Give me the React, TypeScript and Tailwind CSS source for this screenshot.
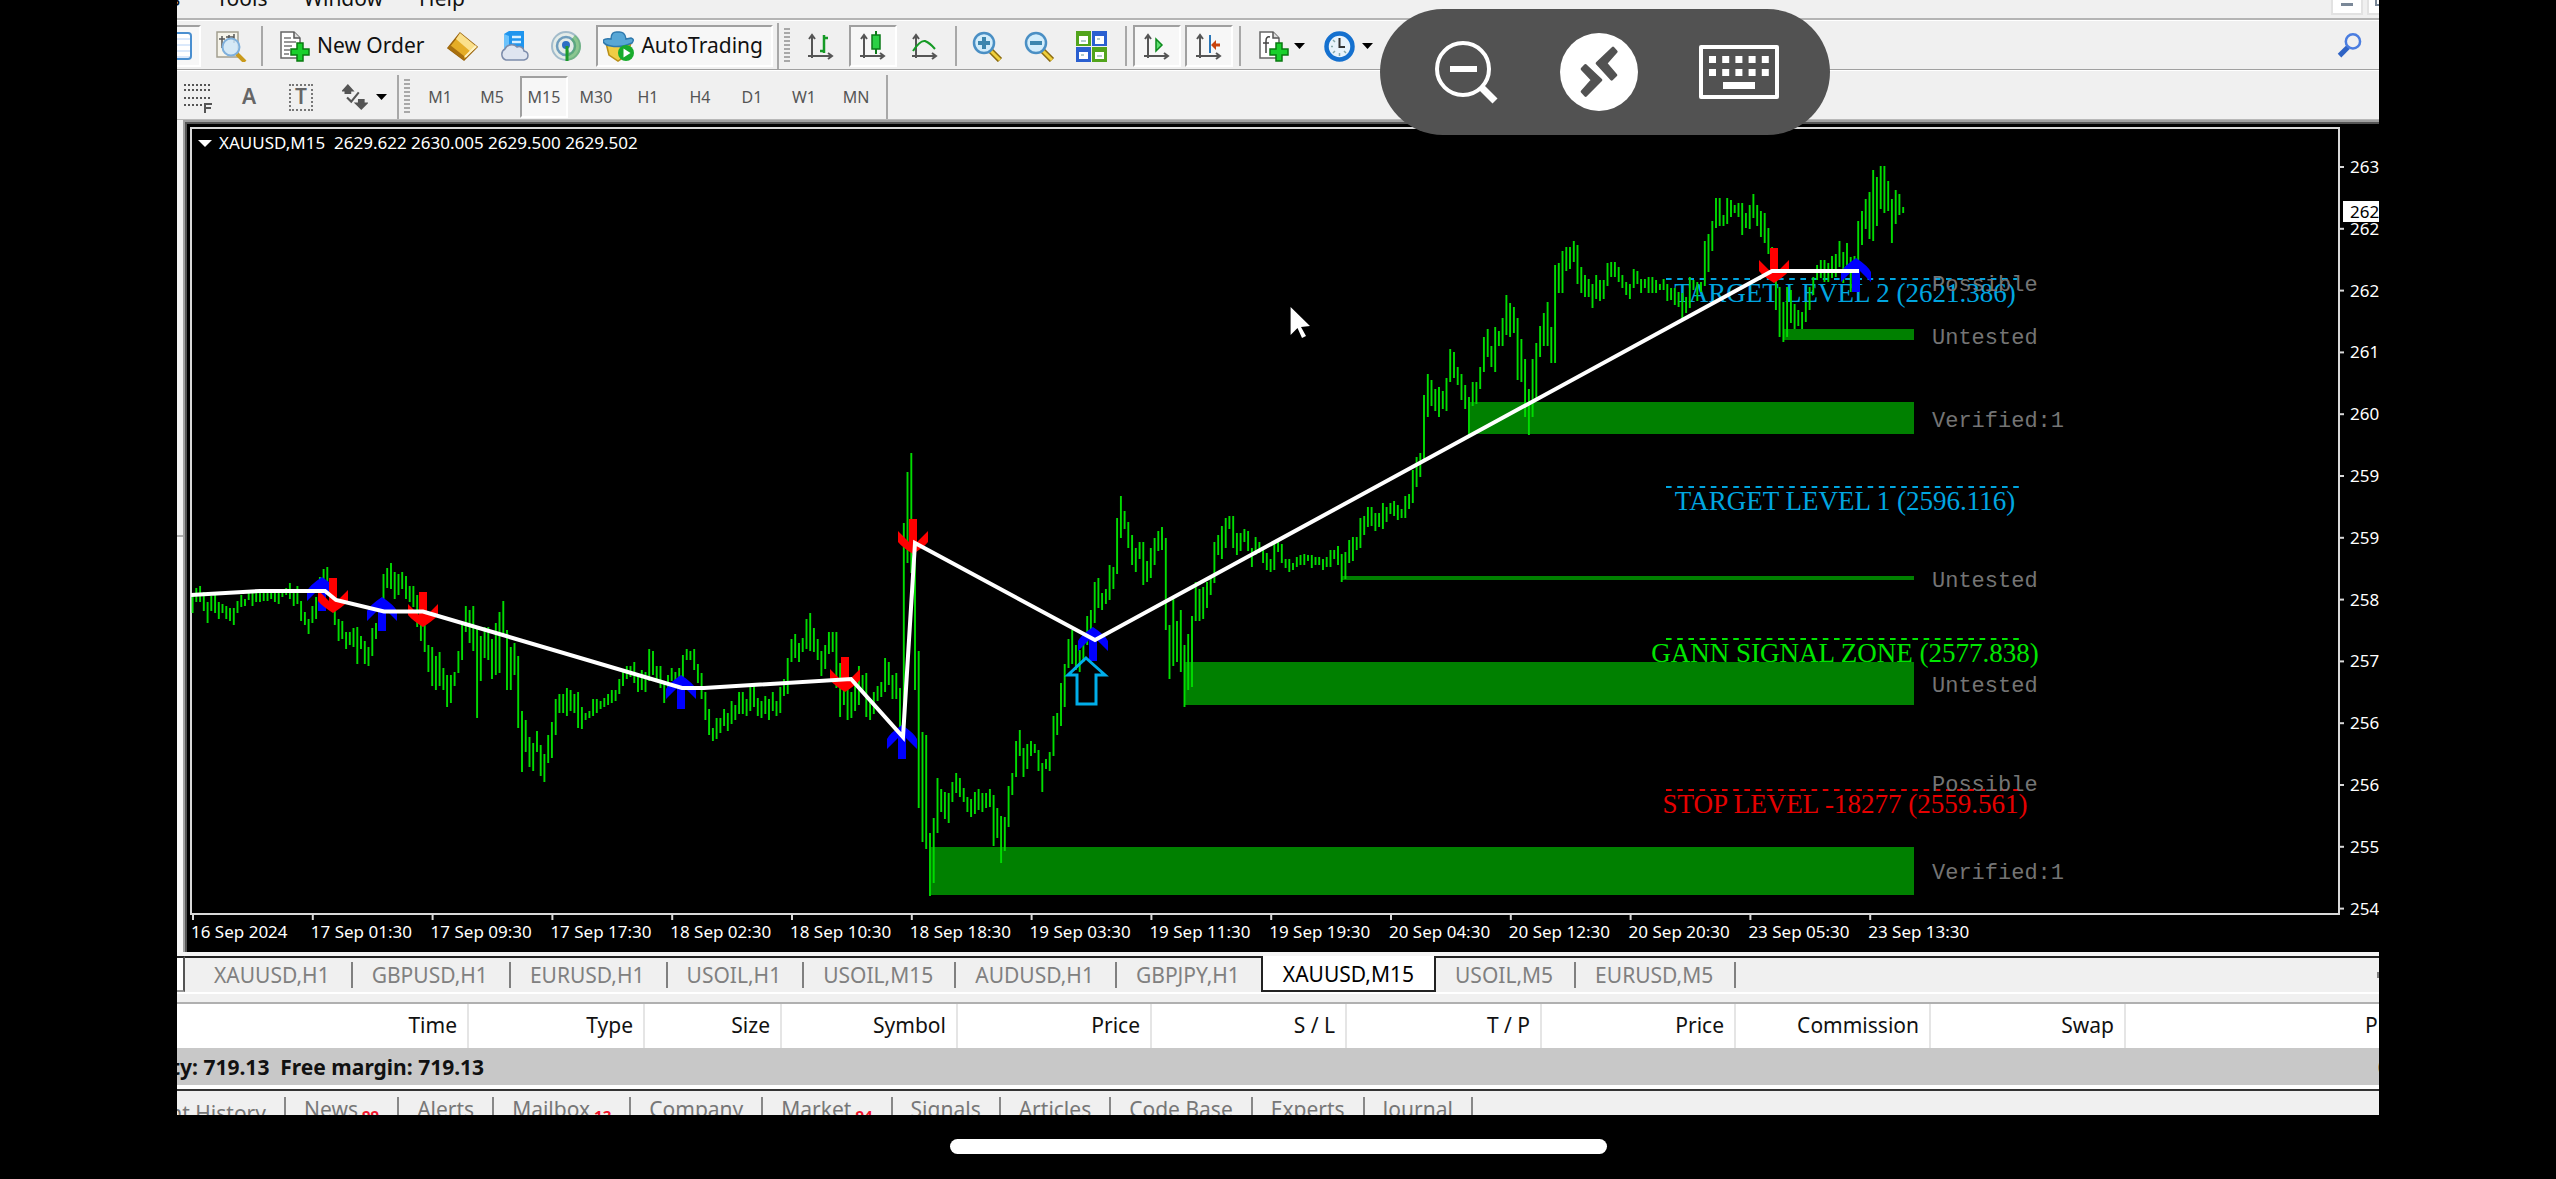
import type { ReactNode } from "react"

// high / low pairs of every M15 bar, in chart units
const BARS = `
595 613,588 602,586 602,592 611,602 623,596 611,594 613,602 619,604 613,606 619,608 621,608 625,601 613,595 607,599 606,593 600,
593 606,593 602,593 602,593 601,593 601,592 599,592 602,592 604,590 597,588 595,583 599,590 606,586 604,601 621,612 625,619 634,
606 623,597 619,577 600,569 587,567 587,587 607,593 625,619 641,621 639,632 649,632 645,628 647,627 664,636 649,641 664,647 666,
628 656,623 639,607 627,574 607,568 588,563 589,572 599,574 595,572 589,576 599,586 602,586 607,595 627,600 641,620 652,645 672,
647 686,656 690,652 686,668 690,675 707,675 703,672 686,651 673,622 660,606 632,610 643,606 651,627 718,636 681,627 658,627 660,
639 679,623 675,612 673,601 636,630 690,647 690,643 675,656 728,711 772,720 752,737 767,743 771,731 752,745 776,754 782,735 763,
722 758,699 735,694 713,694 713,688 716,690 711,694 713,692 728,707 729,713 720,711 718,699 716,699 713,701 709,698 707,694 705,
690 703,690 701,679 694,672 686,666 679,666 677,662 683,675 692,670 690,672 692,649 681,651 675,666 681,666 688,681 703,675 688,
668 681,672 683,668 687,655 677,649 660,651 660,649 670,664 683,673 699,692 720,709 735,728 741,718 739,718 733,709 726,713 731,
701 724,705 720,692 714,692 714,699 716,686 711,685 707,698 716,701 718,696 714,699 720,692 711,701 716,687 713,679 696,658 694,
639 662,634 658,643 662,638 652,619 649,613 651,628 652,639 660,651 676,645 669,632 654,632 652,632 688,663 717,677 705,687 720,
692 718,680 711,666 705,675 692,673 717,702 720,692 714,686 701,682 697,658 692,662 685,675 699,673 699,688 735,523 737,472 563,
453 573,543 690,651 808,732 842,735 849,833 896,818 883,778 833,789 812,792 819,793 823,782 802,773 793,778 797,788 802,797 812,
799 817,792 814,789 810,793 812,793 808,789 807,795 846,808 838,816 863,817 851,786 827,773 795,741 777,730 756,748 777,744 769,
741 756,744 753,750 771,763 792,759 769,752 771,716 756,713 735,683 726,664 707,639 668,630 664,645 670,650 672,643 662,616 645,
610 637,582 623,578 608,593 610,589 604,565 600,567 589,518 574,496 538,511 529,522 548,535 565,548 572,542 559,542 585,561 582,
548 578,538 565,531 551,527 550,538 630,625 679,598 666,621 662,610 672,645 707,634 690,616 687,582 621,589 621,587 619,582 608,
577 595,542 583,535 555,526 559,518 548,516 529,516 548,533 555,533 551,529 542,531 551,548 567,537 555,542 553,547 563,553 570,
559 572,542 570,542 552,544 563,559 568,559 572,563 570,557 567,555 565,554 565,555 561,555 568,557 565,557 565,559 570,557 567,
550 567,550 559,546 565,554 582,552 579,540 563,537 561,537 550,518 548,516 535,507 527,507 526,513 531,513 527,503 529,507 522,
503 514,501 516,505 520,509 518,496 518,494 509,470 503,457 487,453 477,395 461,374 417,380 406,389 411,387 417,391 409,378 411,
349 382,352 378,367 385,374 400,385 409,397 435,382 406,382 404,367 389,337 372,329 357,346 367,327 372,331 346,318 346,295 335,
303 337,307 333,318 380,339 382,359 417,389 435,359 417,343 400,326 357,313 346,302 346,327 363,265 363,263 293,251 293,247 271,
247 269,241 262,245 284,267 293,275 297,279 297,284 308,275 299,280 301,280 299,263 286,262 277,262 277,267 282,275 288,282 295,
284 299,269 288,271 284,279 293,279 288,277 293,277 293,280 293,284 290,279 290,284 301,288 300,288 305,292 307,293 320,297 313,
277 308,280 290,282 301,282 292,241 286,234 272,221 251,198 228,198 226,215 226,198 224,200 217,205 213,203 217,203 235,213 228,
205 229,194 218,205 226,211 237,213 243,228 254,247 273,277 310,287 337,302 342,287 337,290 323,304 329,310 326,312 329,302 322,
287 310,277 295,265 280,260 278,260 282,263 282,256 278,254 277,241 267,252 283,243 270,257 292,256 277,221 263,211 245,199 229,
192 239,170 241,177 226,166 209,166 213,181 211,199 243,190 224,194 215,207 213`

const FIRST_BAR = 192.6
const BAR_STEP = 3.743

const barPath = BARS.trim()
  .split(",")
  .map((pair, i) => {
    const [high, low] = pair.trim().split(" ")
    return `M${(FIRST_BAR + i * BAR_STEP).toFixed(1)} ${high}V${low}`
  })
  .join("")

const ZONES = [
  { x: 1784, top: 329, bottom: 340 },
  { x: 1470, top: 402, bottom: 434 },
  { x: 1342, top: 576, bottom: 580 },
  { x: 1185, top: 662, bottom: 705 },
  { x: 931, top: 847, bottom: 895 },
]

const LEVELS = [
  { label: "TARGET LEVEL 2 (2621.386)", y: 279, color: "#00a6e0" },
  { label: "TARGET LEVEL 1 (2596.116)", y: 487, color: "#00a6e0" },
  { label: "GANN SIGNAL ZONE (2577.838)", y: 639, color: "#00e600" },
  { label: "STOP LEVEL -18277 (2559.561)", y: 790, color: "#e60000" },
]

const NOTES = [
  { label: "Possible", y: 291 },
  { label: "Untested", y: 344 },
  { label: "Verified:1", y: 427 },
  { label: "Untested", y: 587 },
  { label: "Untested", y: 692 },
  { label: "Possible", y: 791 },
  { label: "Verified:1", y: 879 },
]

const BUYS = [[322, 577], [382, 597], [681, 675], [902, 725], [1093, 627], [1856, 258]]
const SELLS = [[333, 613], [423, 627], [845, 692], [913, 554], [1774, 283]]

const PRICES = [
  "2634.955", "2627.515", "2620.075", "2612.635", "2604.955", "2597.515", "2590.075",
  "2582.635", "2574.955", "2567.515", "2560.075", "2552.635", "2544.955",
]

const TIMES = [
  "16 Sep 2024", "17 Sep 01:30", "17 Sep 09:30", "17 Sep 17:30", "18 Sep 02:30",
  "18 Sep 10:30", "18 Sep 18:30", "19 Sep 03:30", "19 Sep 11:30", "19 Sep 19:30",
  "20 Sep 04:30", "20 Sep 12:30", "20 Sep 20:30", "23 Sep 05:30", "23 Sep 13:30",
]

const PERIODS = ["M1", "M5", "M15", "M30", "H1", "H4", "D1", "W1", "MN"]

const CHART_TABS = [
  "XAUUSD,H1", "GBPUSD,H1", "EURUSD,H1", "USOIL,H1", "USOIL,M15",
  "AUDUSD,H1", "GBPJPY,H1", "XAUUSD,M15", "USOIL,M5", "EURUSD,M5",
]

const COLUMNS = [
  { name: "Time", width: "w-[291px]" },
  { name: "Type", width: "w-[176px]" },
  { name: "Size", width: "w-[137px]" },
  { name: "Symbol", width: "w-[176px]" },
  { name: "Price", width: "w-[194px]" },
  { name: "S / L", width: "w-[195px]" },
  { name: "T / P", width: "w-[195px]" },
  { name: "Price", width: "w-[194px]" },
  { name: "Commission", width: "w-[195px]" },
  { name: "Swap", width: "w-[195px]" },
  { name: "Profit", width: "" },
]

const TERMINAL_TABS = [
  { name: "News", count: "99" },
  { name: "Alerts" },
  { name: "Mailbox", count: "12" },
  { name: "Company" },
  { name: "Market", count: "94" },
  { name: "Signals" },
  { name: "Articles" },
  { name: "Code Base" },
  { name: "Experts" },
  { name: "Journal" },
]

function Icon({ children, size = "size-[31px]" }: { children: ReactNode; size?: string }) {
  return (
    <svg viewBox="0 0 31 31" className={`${size} shrink-0`} fill="none" aria-hidden="true">
      {children}
    </svg>
  )
}

function Axes() {
  return (
    <path
      d="M6 4V27M2 25H26M3 8L6 4L9 8M22 22L26 25L22 28"
      stroke="#555"
      strokeWidth="2"
    />
  )
}

function Plus() {
  return (
    <path
      d="M17 14h6v6h6v6h-6v6h-6v-6h-6v-6h6z"
      fill="#19d02c"
      stroke="#087a10"
      strokeWidth="1.5"
      transform="translate(1 -2)"
    />
  )
}

function Page() {
  return (
    <>
      <path d="M2 1H15L21 7V27H2Z" fill="#fff" stroke="#666" strokeWidth="1.5" />
      <path d="M15 1V7H21" fill="#ddd" stroke="#555" strokeWidth="1.5" />
    </>
  )
}

function Lens({ minus }: { minus?: boolean }) {
  return (
    <>
      <path d="M19 20L28 29" stroke="#8a6a10" strokeWidth="6" />
      <path d="M19 20L28 29" stroke="#f0cf3c" strokeWidth="3" />
      <circle cx="12" cy="12" r="10" fill="#d3edfb" stroke="#4a8fc4" strokeWidth="2.5" />
      <path d={minus ? "M6 12H18" : "M6 12H18M12 6V18"} stroke="#3d86ae" strokeWidth="4" />
    </>
  )
}

function Caret() {
  return (
    <svg viewBox="0 0 11 6" className="h-1.5 w-[11px]" aria-hidden="true">
      <path d="M0 0H11L5.5 6Z" fill="#000" />
    </svg>
  )
}

function Separator() {
  return <div className="h-10 w-0.5 bg-[#a8a8a8]" />
}

function Gripper() {
  return (
    <div className="h-9 w-1.5 bg-[repeating-linear-gradient(to_bottom,#a8a8a8_0_2px,#f0f0f0_2px_4px)]" />
  )
}

function Tool({ label, pressed, children }: { label: string; pressed?: boolean; children: ReactNode }) {
  return (
    <button
      aria-label={label}
      className={`mx-0.5 flex h-[42px] w-12 items-center justify-center border-2 ${
        pressed ? "border-t-[#a0a0a0] border-l-[#a0a0a0] border-r-white border-b-white bg-[#f7f7f7]" : "border-transparent"
      }`}
    >
      {children}
    </button>
  )
}

function MenuBar() {
  return (
    <nav className="flex h-5 items-end justify-between overflow-hidden border-b-2 border-[#b4b4b4]">
      <div className="flex gap-9 pb-1.5 text-[21px] leading-7">
        <a href="#charts" className="-ml-[61px]">Charts</a>
        <a href="#tools">Tools</a>
        <a href="#window">Window</a>
        <a href="#help">Help</a>
      </div>
      <div className="flex h-full gap-1 pb-[3px]">
        <button aria-label="Minimize" className="flex w-8 justify-center border-2 border-t-0 border-[#e2e2e2] bg-white">
          <span className="mt-[3px] h-[3px] w-3 bg-[#7a8898]" />
        </button>
        <button aria-label="Restore" className="flex w-3 justify-end overflow-hidden border-2 border-t-0 border-r-0 border-[#e2e2e2] bg-white">
          <span className="h-1.5 w-1 border-b-2 border-l-2 border-[#7a8898]" />
        </button>
      </div>
    </nav>
  )
}

function MainToolbar() {
  return (
    <div className="flex h-[50px] items-center border-t border-b border-t-white border-b-[#a0a0a0] pt-0.5 text-[21px]">
      <button aria-label="Market Watch" className="flex h-[42px] w-6 items-center border-2 border-l-0 border-t-[#a0a0a0] border-r-white border-b-white bg-[#f7f7f7]">
        <span className="h-7 w-[15px] rounded-r-sm border-2 border-l-0 border-[#4a8fd0] bg-[repeating-linear-gradient(to_bottom,#fff_0_4px,#dbe9fb_4px_6px)]" />
      </button>
      <div className="ml-1">
        <Tool label="Data Window">
          <Icon>
            <path d="M1 1H22V26H1Z" fill="#f6f4ea" stroke="#a39f90" strokeWidth="1.5" />
            <path d="M6 5V17M3 8H9M13 4V9M10 6H18M18 3V12" stroke="#555" strokeWidth="1.5" />
            <path d="M20 22L29 31" stroke="#c99a1c" strokeWidth="4" />
            <circle cx="15" cy="16" r="8.5" fill="#cfe6f8" fillOpacity=".85" stroke="#7fb0dc" strokeWidth="2" />
          </Icon>
        </Tool>
      </div>
      <div className="ml-1"><Separator /></div>
      <button className="ml-1 flex items-center gap-[7px] px-3">
        <Icon>
          <Page />
          <path d="M5 7H12M5 11H17M5 15H13M5 19H11M5 23H10" stroke="#777" strokeWidth="1.5" />
          <Plus />
        </Icon>
        New Order
      </button>
      <Tool label="MetaEditor">
        <Icon>
          <path d="M13 2L30 16L17 29L1 17Z" fill="#e5ad27" stroke="#9b640c" strokeWidth="1.5" />
          <path d="M13 2L30 16L24 21L9 8Z" fill="#fbe08a" />
          <path d="M1 17L17 29L17 25L3 14Z" fill="#a8700f" />
          <path d="M18 26L29 15" stroke="#fff3c4" strokeWidth="2" />
        </Icon>
      </Tool>
      <Tool label="Virtual Hosting">
        <Icon>
          <path d="M5 3L10 0H25V18H5Z" fill="#1f95ee" />
          <path d="M5 3L10 5V19H5Z" fill="#6cc2fb" />
          <path d="M13 6H22M13 11H22" stroke="#d8f0ff" strokeWidth="2.5" />
          <path d="M7 29a6 6 0 0 1-1-11a7 6 0 0 1 12-2a5 5 0 0 1 7 4a5 4.6 0 0 1 0 9z" fill="#dfe5f0" stroke="#7c8cab" strokeWidth="1.5" />
        </Icon>
      </Tool>
      <Tool label="Signals">
        <Icon>
          <circle cx="15" cy="15" r="14" fill="#e4ece8" stroke="#a3bccb" strokeWidth="2" />
          <circle cx="15" cy="15" r="9" stroke="#6f9dbd" strokeWidth="2.5" />
          <path d="M15 15V30A15 15 0 0 0 30 15A15 15 0 0 0 24 4L20 9A8 8 0 0 1 19 22Z" fill="#4fae55" fillOpacity=".6" />
          <circle cx="15" cy="14" r="4" fill="#2c6fc4" />
          <path d="M16 15V30" stroke="#1c9a2b" strokeWidth="3" />
        </Icon>
      </Tool>
      <button className="ml-1 flex h-[42px] items-center gap-[7px] border-2 border-t-[#a0a0a0] border-l-[#a0a0a0] border-r-white border-b-white bg-[#f7f7f7] pr-2 pl-[5px]">
        <Icon>
          <path d="M3 12L28 12L24 24L15 30L6 24Z" fill="#f0cd45" stroke="#b98f17" strokeWidth="1.5" />
          <path d="M0 10Q1 14 8 15Q18 17 29 12Q32 8 28 7L23 8Q22 0 15 1Q8 0 8 8Q1 7 0 10Z" fill="#58a7d6" stroke="#2f79ad" strokeWidth="1.5" />
          <circle cx="23" cy="22" r="8" fill="#18ab2c" />
          <path d="M20.5 17.5L27.5 22L20.5 26.5Z" fill="#fff" />
        </Icon>
        AutoTrading
      </button>
      <div className="ml-1 h-full w-0.5 bg-[#a8a8a8]" />
      <div className="mx-[5px]"><Gripper /></div>
      <Tool label="Bar Chart">
        <Icon>
          <Axes />
          <path d="M18 4V22M18 7H22M14 20H18" stroke="#159a25" strokeWidth="2.5" />
        </Icon>
      </Tool>
      <Tool label="Candlesticks" pressed>
        <Icon>
          <Axes />
          <path d="M18 0V23" stroke="#0b7a18" strokeWidth="2" />
          <path d="M14 4H22V18H14Z" fill="#2bd045" stroke="#0b7a18" strokeWidth="1.5" />
        </Icon>
      </Tool>
      <Tool label="Line Chart">
        <Icon>
          <Axes />
          <path d="M3 20Q10 9 15 10Q20 12 25 18" stroke="#159a25" strokeWidth="2" />
        </Icon>
      </Tool>
      <div className="mx-1"><Separator /></div>
      <Tool label="Zoom In"><Icon><Lens /></Icon></Tool>
      <Tool label="Zoom Out"><Icon><Lens minus /></Icon></Tool>
      <Tool label="Tile Windows">
        <Icon>
          <path d="M0 0H15V15H0ZM16 16H31V31H16Z" fill="#52a41c" />
          <path d="M16 0H31V15H16ZM0 16H15V31H0Z" fill="#2a5fd0" />
          <path d="M3 5H12V13H3ZM19 5H28V13H19ZM3 21H12V28H3ZM19 21H28V28H19Z" fill="#fff" />
          <path d="M5 10H10M21 8H24M5 24H8M21 25H26" stroke="#9bb" strokeWidth="1.5" />
        </Icon>
      </Tool>
      <div className="mr-1 ml-2"><Separator /></div>
      <Tool label="Auto Scroll" pressed>
        <Icon>
          <Axes />
          <path d="M14 8V20L20 14Z" fill="#5fe070" stroke="#0b8a1c" strokeWidth="1.5" />
        </Icon>
      </Tool>
      <Tool label="Chart Shift" pressed>
        <Icon>
          <Axes />
          <path d="M16 4V22" stroke="#2c77b8" strokeWidth="2" />
          <path d="M17 14L22 9V12.500H26V15.500H22V19Z" fill="#c8420c" />
        </Icon>
      </Tool>
      <div className="ml-1"><Separator /></div>
      <button aria-label="Indicators" className="ml-1.5 flex items-center gap-[5px] px-[11px]">
        <Icon>
          <Page />
          <path d="M12 6Q8 5 8 10V22M5 12H11" stroke="#444" strokeWidth="1.5" />
          <Plus />
        </Icon>
        <Caret />
      </button>
      <button aria-label="Periods" className="flex items-center gap-[7px] px-2">
        <Icon>
          <circle cx="15.5" cy="15.5" r="13" fill="#e8f3fb" stroke="#1470cf" strokeWidth="4.5" />
          <path d="M15.5 7V16H21" stroke="#333" strokeWidth="2" />
          <path d="M15.5 22V25M7 15.5H9M9 9L11 11M9 22L11 20M22 22L20 20" stroke="#8aa" strokeWidth="1.5" />
        </Icon>
        <Caret />
      </button>
      <button aria-label="Search" className="mr-4 ml-auto">
        <Icon size="size-[26px]">
          <path d="M3 27L13 17" stroke="#2f63c4" strokeWidth="6" />
          <circle cx="19" cy="10" r="8.5" stroke="#4a7de0" strokeWidth="3" />
        </Icon>
      </button>
    </div>
  )
}

function PeriodToolbar() {
  return (
    <div className="flex h-[50px] items-center border-t border-b border-t-white border-b-[#b8b8b8] pt-1 text-base text-[#555]">
      <button aria-label="Fibonacci" className="w-[46px] pl-[7px]">
        <Icon>
          <path d="M0 3H26M0 8H26M0 16H26M0 23H18" stroke="#555" strokeWidth="2" strokeDasharray="2 2" />
          <path d="M21 31V22H28M21 26H27" stroke="#555" strokeWidth="2" />
        </Icon>
      </button>
      <button className="w-[52px] text-[21px] font-semibold text-[#666]">A</button>
      <button className="flex w-[52px] justify-center">
        <span className="flex h-[27px] w-6 items-center justify-center border-2 border-dotted border-[#777] text-[21px] font-semibold text-[#666]">T</span>
      </button>
      <button aria-label="Arrows" className="flex items-center gap-2 pr-2.5 pl-[15px]">
        <Icon size="size-[26px]">
          <path d="M7 0L15 9H11V12H3V9H-1ZM23 31L14 22H19V18H27V22H32Z" fill="#555" />
          <path d="M6 16L11 21L20 10" stroke="#555" strokeWidth="2.5" />
        </Icon>
        <Caret />
      </button>
      <div className="h-full w-0.5 bg-[#a8a8a8]" />
      <div className="mr-1 ml-[5px]"><Gripper /></div>
      {PERIODS.map((period) => (
        <Tool key={period} label={period} pressed={period === "M15"}>{period}</Tool>
      ))}
      <div className="ml-1 h-full w-0.5 bg-[#a8a8a8]" />
    </div>
  )
}

function Chart() {
  return (
    <svg viewBox="187 124 2192 828" className="block h-auto w-full bg-black font-['Noto_Sans',sans-serif] text-[17px]">
      <g fill="none" stroke="#d8d8d8" strokeWidth="2">
        <path d="M191 914V128H2339V914Z" />
        {TIMES.map((time, i) => (
          <path key={time} d={`M${193 + i * 119.8} 914V920`} />
        ))}
        {PRICES.map((price, i) => (
          <path key={price} d={`M2339 ${167 + i * 61.8}H2344`} />
        ))}
      </g>

      <path d="M198 140H212L205 147Z" fill="#fff" />
      <g fill="#fff">
        <text x="219" y="149">{"XAUUSD,M15\u00a0 2629.622 2630.005 2629.500 2629.502"}</text>
        {TIMES.map((time, i) => (
          <text key={time} x={191 + i * 119.8} y="938">{time}</text>
        ))}
        {PRICES.map((price, i) => (
          <text key={price} x="2350" y={173 + i * 61.8}>{price}</text>
        ))}
      </g>
      <path d="M2343 201H2379V222H2343Z" fill="#fff" />
      <text x="2350" y="218" fill="#000">2629.502</text>

      {LEVELS.map((level) => (
        <g key={level.label}>
          <path d={`M1666 ${level.y}H2022`} stroke={level.color} strokeWidth="2" strokeDasharray="5.6 5.6" />
          <text
            x="1845"
            y={level.y + 23}
            fill={level.color}
            textAnchor="middle"
            className="font-['Liberation_Serif',serif] text-[27px]"
          >
            {level.label}
          </text>
        </g>
      ))}

      {NOTES.map((note) => (
        <text key={note.y} x="1932" y={note.y} fill="#747474" className="font-['Liberation_Mono',monospace] text-[22px]">
          {note.label}
        </text>
      ))}

      {ZONES.map((zone) => (
        <path key={zone.x} d={`M${zone.x} ${zone.top}H1914V${zone.bottom}H${zone.x}Z`} fill="#008000" />
      ))}
      <path d={barPath} stroke="#00dc00" strokeWidth="1.9" />

      {BUYS.map(([x, y]) => (
        <path key={x} transform={`translate(${x} ${y})`} d="M0 0Q12 8 15 14V24L4 13V34H-4V13L-15 24V14Q-12 8 0 0Z" fill="#00f" />
      ))}
      {SELLS.map(([x, y]) => (
        <path key={x} transform={`translate(${x} ${y})`} d="M0 0Q11 -7 15 -12V-23L4 -12V-35H-4V-12L-15 -23V-12Q-11 -7 0 0Z" fill="#f00" />
      ))}
      <path d="M1086 658L1105 675H1096V704H1077V675H1068Z" fill="none" stroke="#00aeea" strokeWidth="3" />
      <path
        d="M191 595L208 594L260 591H325L336 600L384 611.500H423L682 688H704L851 679L903 737L915 543L1095 640L1772 271H1859"
        fill="none"
        stroke="#fff"
        strokeWidth="4"
      />
      <path d="M1290.600 307L1310 326L1301 327L1306 336L1302 338L1297.500 328L1290.600 335Z" fill="#fff" />
    </svg>
  )
}

function ChartTabs() {
  return (
    <div className="border-t-4 border-[#f4f4f4]">
      <div className="flex h-9 text-[21px] leading-7 text-[#808080]">
        <div className="w-2 border-t-2 border-r-2 border-b-2 border-t-[#222] border-r-[#555] border-b-[#999] bg-white" />
        <div className="w-2.5 border-t-2 border-[#222]" />
        {CHART_TABS.map((tab) =>
          tab === "XAUUSD,M15" ? (
            <button key={tab} className="border-2 border-t-0 border-[#222] bg-white px-5 pt-0.5 text-black">{tab}</button>
          ) : (
            <button key={tab} className="flex items-center border-t-2 border-[#222]">
              <span className="pr-[21px] pl-[19px]">{tab}</span>
              {tab !== "GBPJPY,H1" && <span className="h-[26px] w-0.5 bg-[#808080]" />}
            </button>
          )
        )}
        <div className="flex grow items-center justify-end border-t-2 border-[#222]">
          <span className="h-1.5 w-0.5 bg-[#808080]" />
        </div>
      </div>
      <div className="h-2.5 border-t-2 border-white" />
    </div>
  )
}

function Terminal() {
  return (
    <section className="overflow-hidden border-t-2 border-[#b0b0b0] bg-white text-[21px] text-[#111]">
      <table className="w-[calc(100%+52px)] table-fixed border-collapse">
        <thead>
          <tr className="h-11">
            {COLUMNS.map((column, i) => (
              <th key={i} scope="col" className={`${column.width} border-r-2 border-[#e5e5e5] pr-[10px] text-right font-normal`}>
                {column.name}
              </th>
            ))}
          </tr>
        </thead>
        <tbody>
          <tr className="h-[37px] bg-[#c8c8c8] font-bold leading-7">
            <td colSpan={10} className="whitespace-pre">
              <span className="-ml-[51px]">{"Equity: 719.13  Free margin: 719.13"}</span>
            </td>
            <td className="pr-[10px] text-right">0.00</td>
          </tr>
        </tbody>
      </table>
      <div className="mt-1 flex h-[26px] overflow-hidden border-t-2 border-[#333] bg-[#f0f0f0] text-[#777]">
        <div className="flex pt-1.5 leading-6">
          <button className="-ml-[85px] h-8 border-r-2 border-[#888] px-[18px]">Account History</button>
          {TERMINAL_TABS.map((tab) => (
            <button key={tab.name} className="flex h-8 border-r-2 border-[#888] px-[18px]">
              {tab.name}
              {tab.count && <span className="mt-1.5 ml-1 text-[15px] font-bold text-[#f0142d]">{tab.count}</span>}
            </button>
          ))}
        </div>
      </div>
    </section>
  )
}

function SessionBar() {
  return (
    <div className="absolute top-[9px] left-[54%] flex h-[126px] w-[450px] items-center justify-between rounded-full bg-[#525252] pr-[51px] pl-[55px]">
      <button aria-label="Zoom out">
        <svg viewBox="0 0 64 64" className="size-16" fill="none" stroke="#fff">
          <circle cx="28" cy="29" r="26" strokeWidth="4" />
          <path d="M15 29H42" strokeWidth="6" />
          <path d="M46 47L60 61" strokeWidth="7" />
        </svg>
      </button>
      <button aria-label="Connection" className="rounded-full bg-white">
        <svg viewBox="0 0 234 234" className="size-[78px]" fill="#525252" stroke="#525252" strokeWidth="8" strokeLinejoin="round">
          <path d="M159 45L169 56L138 91L168 126L155 139L111 91Z" />
          <path d="M76 97L123 141L77 188L66 176L97 141L66 108Z" />
        </svg>
      </button>
      <button aria-label="Keyboard">
        <svg viewBox="0 0 80 54" className="h-[54px] w-20" fill="none" stroke="#fff">
          <path d="M2 2H78V52H2Z" strokeWidth="4" strokeLinejoin="round" />
          <path d="M10 14.500H72M10 27.500H72" strokeWidth="7" strokeDasharray="7 6.200" />
          <path d="M24 40.500H56" strokeWidth="7" />
        </svg>
      </button>
    </div>
  )
}

export default function App() {
  return (
    <div className="relative min-h-screen overflow-hidden bg-black px-[177px] font-['Noto_Sans',sans-serif] text-[#111]">
      <main className="overflow-hidden bg-[#f0f0f0]">
        <MenuBar />
        <MainToolbar />
        <PeriodToolbar />
        <div className="flex">
          <div className="flex w-1.5 flex-col">
            <div className="flex-1" />
            <div className="flex-1 border-t-2 border-[#b0b0b0] bg-[#f6f6f6]" />
          </div>
          <div className="min-w-0 flex-1 border-t-2 border-l-2 border-[#a0a0a0]">
            <div className="border-t-2 border-l-2 border-[#555]">
              <Chart />
            </div>
          </div>
        </div>
        <ChartTabs />
        <Terminal />
      </main>
      <div className="mx-auto mt-6 h-[15px] w-[657px] rounded-full bg-white" />
      <SessionBar />
    </div>
  )
}
